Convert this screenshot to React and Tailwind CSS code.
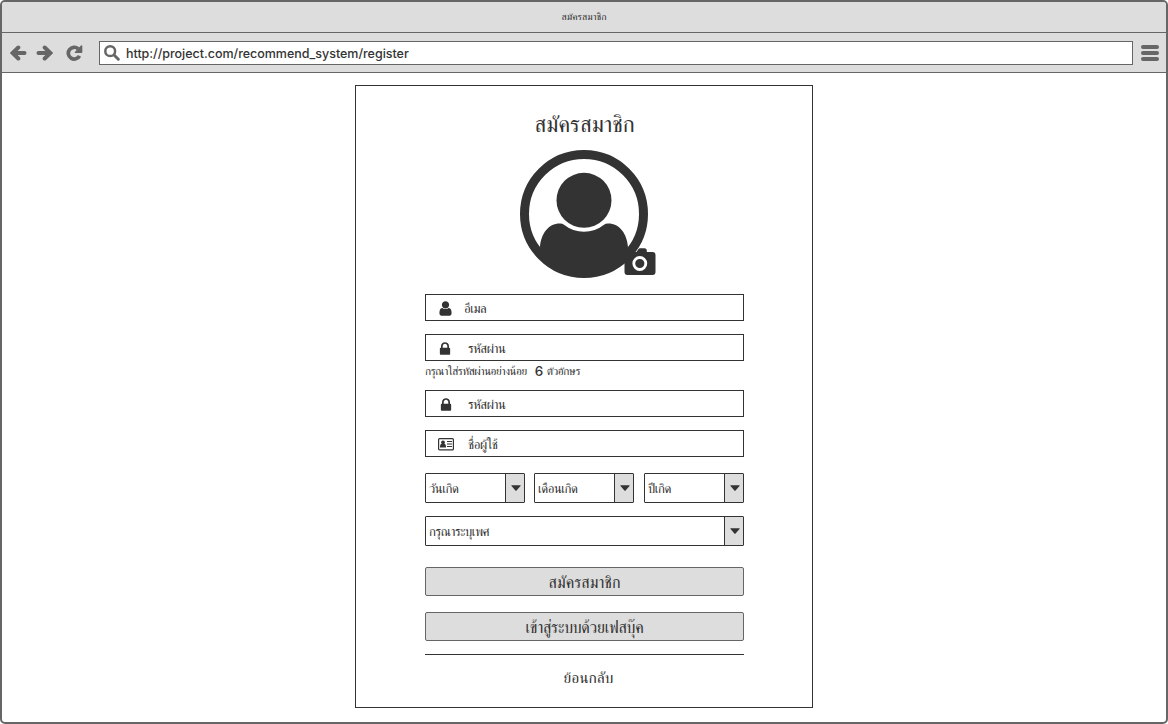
const USER = "M1536 1399q0 109-62.5 187t-150.5 78h-854q-88 0-150.5-78t-62.5-187q0-85 8.5-160.5t31.5-152 58.5-131 94-89 134.5-34.5q131 128 313 128t313-128q76 0 134.5 34.5t94 89 58.5 131 31.5 152 8.5 160.5zm-256-887q0 159-112.5 271.5t-271.5 112.5-271.5-112.5-112.5-271.5 112.5-271.5 271.5-112.5 271.5 112.5 112.5 271.5z";
const LOCK = "M640 768h512v-192q0-106-75-181t-181-75-181 75-75 181v192zm832 96v576q0 40-28 68t-68 28h-960q-40 0-68-28t-28-68v-576q0-40 28-68t68-28h32v-192q0-184 132-316t316-132 316 132 132 316v192h32q40 0 68 28t28 68z";

function Glyph({ d, className }) {
  return (
    <svg viewBox="0 0 1792 1792" fill="currentColor" className={`shrink-0 ${className}`}>
      <path d={d} />
    </svg>
  );
}

function Arrow({ className }) {
  return (
    <svg viewBox="0 0 17 16" className={`h-4 w-[17px] shrink-0 ${className}`} fill="none" stroke="currentColor" strokeWidth="4" strokeLinejoin="round" strokeLinecap="round">
      <path d="M8.300 2.500L2.600 8L8.300 13.500" strokeLinejoin="miter" />
      <path d="M4 8H14.500" />
    </svg>
  );
}

function Reload({ className }) {
  return (
    <svg viewBox="0 0 17 16" className={`h-4 w-[17px] shrink-0 ${className}`}>
      <path d="M12.200 3.800A5.900 5.900 0 1 0 13.500 10.800" fill="none" stroke="currentColor" strokeWidth="3.700" />
      <path d="M16.300 .800V7.200Q16.300 8 15.500 8H9.300Q8.300 7.700 8.900 6.900L15 .500Q16 0 16.300 .800Z" fill="currentColor" />
    </svg>
  );
}

function Search({ className }) {
  return (
    <svg viewBox="0 0 16 16" className={`size-4 shrink-0 ${className}`} fill="none" stroke="currentColor" strokeLinecap="round">
      <circle cx="6.200" cy="6.200" r="4.900" strokeWidth="2.500" />
      <path d="M10.300 10.300L14.300 14.200" strokeWidth="3" />
    </svg>
  );
}

function Avatar() {
  return (
    <svg viewBox="0 0 128 128" className="size-32" fill="#333">
      <circle cx="64" cy="64" r="59.5" fill="none" stroke="#333" strokeWidth="9" />
      <circle cx="64" cy="50.3" r="27.5" />
      <path d="M20 97C21 84 28 73.400 40 73.400Q42.500 73.400 44 74.800A32 32 0 0 0 84 74.800Q85.500 73.400 88 73.400C100 73.400 107 84 108 97L106 106A60 60 0 0 1 22 106Z" />
    </svg>
  );
}

function Camera() {
  return (
    <svg viewBox="0 0 32 28" className="h-7 w-8">
      <path d="M3.500 4H12.500L14.500 1Q15 .3 16 .3H20.500Q22.500 .3 22.800 2V4H28.500Q31.500 4 31.500 7V24Q31.500 27 28.500 27H3.500Q.5 27 .5 24V7Q.5 4 3.500 4Z" fill="#333" />
      <circle cx="15.800" cy="15.500" r="6" fill="none" stroke="#fff" strokeWidth="2.800" />
    </svg>
  );
}

function IdCard() {
  return (
    <svg viewBox="0 0 16 13" className="ml-0.5 h-[13px] w-4 shrink-0" fill="#333">
      <rect x=".6" y=".6" width="14.800" height="11.300" rx="1" fill="none" stroke="#333" strokeWidth="1.200" />
      <circle cx="5" cy="4.300" r="1.900" />
      <path d="M2 9.500Q2 5.800 3.700 5.800H6.300Q8 5.800 8 9.500Z" />
      <path d="M9 3h5v1H9zM9 5.500h5v1H9zM9 8h5v1H9z" />
    </svg>
  );
}

function Field({ icon, children, className, gap }) {
  return (
    <div className={`flex h-[27px] items-center border border-[#333] bg-white text-[13px] tracking-[-0.45px] ${className}`}>
      <span className="flex w-[38px] justify-center pt-0.5">{icon}</span>
      <span className={`whitespace-nowrap pt-[3px] leading-[25px] ${gap}`}>{children}</span>
    </div>
  );
}

function Select({ children, className }) {
  return (
    <div className={`flex h-[30px] rounded-[1px] border border-[#333] bg-white text-[13px] tracking-[-0.45px] ${className}`}>
      <span className="flex-1 whitespace-nowrap pl-[3px] leading-8">{children}</span>
      <span className="flex w-[19px] items-center justify-center border-l border-[#333] bg-[#ddd] pl-px">
        <svg viewBox="0 0 10 6" className="h-1.5 w-2.5" fill="#333"><path d="M.8 .3h8.400q.8 0 .3.600L5.600 5.400q-.6.600-1.200 0L.5.900Q0 .3.800.3z" /></svg>
      </span>
    </div>
  );
}

export default function App() {
  return (
    <div className="flex h-[724px] w-[1168px] flex-col overflow-hidden rounded-[5px] border-2 border-[#666] bg-white font-['FreeSerif',serif] text-[#333]">
      <header className="h-[31px] border-b border-[#666] bg-[#ddd] text-center text-[10px] leading-[30px]">สมัครสมาชิก</header>
      <nav className="flex h-10 items-center border-b border-[#666] bg-[#ddd] text-[#666]">
        <Arrow className="ml-2" />
        <Arrow className="ml-[9px] -scale-x-100" />
        <Reload className="ml-[13px]" />
        <div className="ml-4 flex h-6 w-[1034px] items-center border border-[#666] bg-white">
          <Search className="ml-1" />
          <span className="ml-1.5 whitespace-nowrap pt-[3px] font-['Inter',sans-serif] text-[12.5px] font-medium leading-5 tracking-[-0.02px] text-[#333]">http://project.com/recommend_system/register</span>
        </div>
        <div className="ml-2 flex w-[18px] flex-col gap-0.5">
          <i className="h-1 rounded-sm bg-[#666]" />
          <i className="h-1 rounded-sm bg-[#666]" />
          <i className="h-1 rounded-sm bg-[#666]" />
        </div>
      </nav>
      <main className="mx-auto mt-3 flex h-[623px] w-[458px] flex-col border border-[#333] pl-[69px] pr-[68px]">
        <h1 className="mt-[23px] h-8 text-center text-[22.3px] leading-8">สมัครสมาชิก</h1>
        <div className="relative ml-[95px] mt-[9px] size-32">
          <Avatar />
          <div className="absolute left-[104px] top-[98px]"><Camera /></div>
        </div>
        <Field className="mt-4" icon={<Glyph d={USER} className="size-[17px]" />}>อีเมล</Field>
        <Field className="mt-[13px]" gap="ml-1" icon={<Glyph d={LOCK} className="size-4" />}>รหัสผ่าน</Field>
        <p className="flex h-[29px] items-start whitespace-nowrap text-[11.5px] leading-[21px] tracking-[-0.45px]">
          <span>กรุณาใส่รหัสผ่านอย่างน้อย</span>
          <span className="ml-2 mr-1 font-['Inter',sans-serif] text-[13.5px] font-medium leading-5">6</span>
          <span>ตัวอักษร</span>
        </p>
        <Field gap="ml-1" icon={<Glyph d={LOCK} className="ml-0.5 size-4" />}>รหัสผ่าน</Field>
        <Field className="mt-[13px]" gap="ml-1" icon={<IdCard />}>ชื่อผู้ใช้</Field>
        <div className="mt-4 flex">
          <Select className="w-[100px]">วันเกิด</Select>
          <Select className="ml-[9px] w-[100px]">เดือนเกิด</Select>
          <Select className="ml-[10px] w-[100px]">ปีเกิด</Select>
        </div>
        <Select className="mt-[13px]">กรุณาระบุเพศ</Select>
        <button className="mt-[21px] h-[29px] rounded-[2px] border border-[#666] bg-[#ddd] pt-0.5 text-[16px] leading-[27px]">สมัครสมาชิก</button>
        <button className="mt-4 h-[29px] rounded-[2px] border border-[#666] bg-[#ddd] pt-0.5 text-[16px] leading-[27px] tracking-[-0.25px]">เข้าสู่ระบบด้วยเฟสบุ๊ค</button>
        <hr className="mt-[13px] border-[#333]" />
        <a className="ml-2 mt-3 text-center text-[15.5px] leading-6">ย้อนกลับ</a>
      </main>
    </div>
  );
}
